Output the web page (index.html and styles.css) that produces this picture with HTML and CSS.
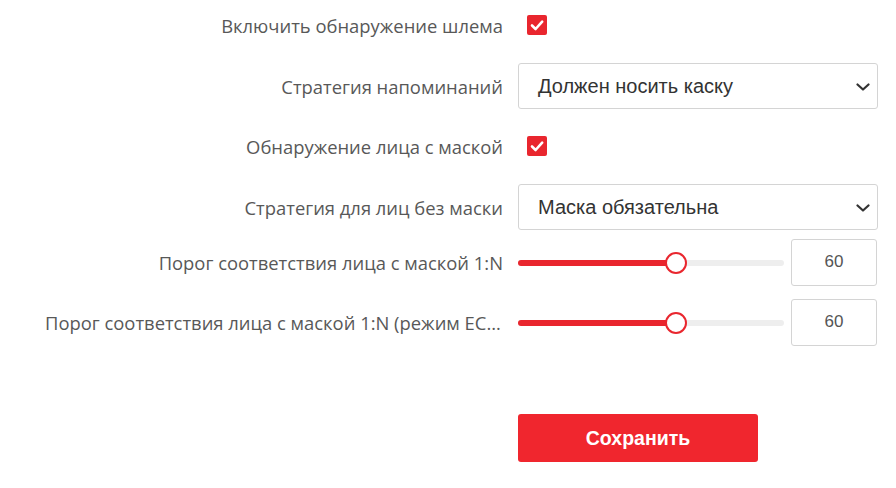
FILE: index.html
```html
<!DOCTYPE html>
<html lang="ru">
<head>
<meta charset="utf-8">
<link rel="stylesheet" href="styles.css">
</head>
<body>
<form class="form">
  <div class="row r1">
    <label class="lbl">Включить обнаружение шлема</label>
    <div class="ctl"><span class="check"><svg viewBox="0 0 20 20" width="20" height="20"><path d="M5 10.5 L8.6 14 L15.2 6.6" fill="none" stroke="#fff" stroke-width="2.6" stroke-linecap="round" stroke-linejoin="round"/></svg></span></div>
  </div>
  <div class="row r2">
    <label class="lbl">Стратегия напоминаний</label>
    <div class="ctl"><div class="select"><span class="sel-text">Должен носить каску</span><svg class="chev" viewBox="0 0 14 8" width="14" height="8"><path d="M1.5 1.5 L7 6.5 L12.5 1.5" fill="none" stroke="#333" stroke-width="2.2" stroke-linecap="round" stroke-linejoin="round"/></svg></div></div>
  </div>
  <div class="row r3">
    <label class="lbl">Обнаружение лица с маской</label>
    <div class="ctl"><span class="check"><svg viewBox="0 0 20 20" width="20" height="20"><path d="M5 10.5 L8.6 14 L15.2 6.6" fill="none" stroke="#fff" stroke-width="2.6" stroke-linecap="round" stroke-linejoin="round"/></svg></span></div>
  </div>
  <div class="row r4">
    <label class="lbl">Стратегия для лиц без маски</label>
    <div class="ctl"><div class="select"><span class="sel-text">Маска обязательна</span><svg class="chev" viewBox="0 0 14 8" width="14" height="8"><path d="M1.5 1.5 L7 6.5 L12.5 1.5" fill="none" stroke="#333" stroke-width="2.2" stroke-linecap="round" stroke-linejoin="round"/></svg></div></div>
  </div>
  <div class="row r5">
    <label class="lbl">Порог соответствия лица с маской 1:N</label>
    <div class="ctl slider-ctl">
      <div class="slider"><div class="track"><div class="fill" style="width: 158px"></div><span class="thumb" style="left: 147px"></span></div></div>
      <div class="num">60</div>
    </div>
  </div>
  <div class="row r6">
    <label class="lbl">Порог соответствия лица с маской 1:N (режим ECO)</label>
    <div class="ctl slider-ctl">
      <div class="slider"><div class="track"><div class="fill" style="width: 158px"></div><span class="thumb" style="left: 147px"></span></div></div>
      <div class="num">60</div>
    </div>
  </div>
  <div class="actions">
    <button type="button" class="save">Сохранить</button>
  </div>
</form>
</body>
</html>
```
FILE: styles.css
```css
html, body {
  margin: 0;
  padding: 0;
  background: #fff;
}
.form {
  display: flex;
  flex-direction: column;
  padding-top: 2px;
  width: 880px;
}
.row {
  display: grid;
  grid-template-columns: 458px 360px;
  column-gap: 15px;
  padding-left: 45px;
  height: 46px;
  align-items: center;
}
.r2 { margin-top: 15px; }
.r3 { margin-top: 14px; }
.r4 { margin-top: 15px; }
.r5 { margin-top: 9px; height: 47px; }
.r6 { margin-top: 13px; height: 47px; }
.lbl {
  font-family: "Open Sans", "Noto Sans", sans-serif;
  font-size: 18.4px;
  color: #585858;
  text-align: right;
  white-space: nowrap;
  overflow: hidden;
  text-overflow: ellipsis;
}
.ctl {
  display: flex;
  align-items: center;
  height: 100%;
}
.check {
  width: 20px;
  height: 20px;
  margin-left: 9px;
  background: #e9262e;
  border-radius: 2px;
  display: flex;
}
.select {
  box-sizing: border-box;
  width: 360px;
  height: 46px;
  border: 1px solid #d4d4d4;
  border-radius: 3px;
  display: flex;
  align-items: center;
  justify-content: space-between;
  padding: 0 7px 0 19px;
  font-family: "Liberation Sans", Arial, sans-serif;
  font-size: 20px;
  color: #333;
}
.chev { margin-top: 1px; }
.slider-ctl {
  gap: 7px;
}
.slider {
  width: 266px;
  display: flex;
  align-items: center;
}
.track {
  position: relative;
  width: 100%;
  height: 6px;
  border-radius: 3px;
  background: #eeeeee;
}
.fill {
  height: 100%;
  border-radius: 3px;
  background: #e9262e;
}
.thumb {
  position: absolute;
  top: 50%;
  width: 22px;
  height: 22px;
  margin-top: -11px;
  box-sizing: border-box;
  border: 2.5px solid #e9262e;
  border-radius: 50%;
  background: #fff;
}
.num {
  box-sizing: border-box;
  width: 86px;
  height: 47px;
  border: 1px solid #d4d4d4;
  border-radius: 3px;
  display: flex;
  align-items: center;
  justify-content: center;
  padding-bottom: 1px;
  font-family: "Liberation Sans", Arial, sans-serif;
  font-size: 17px;
  color: #555;
}
.actions {
  margin-top: 68px;
  padding-left: 518px;
}
.save {
  width: 240px;
  height: 48px;
  border: none;
  border-radius: 3px;
  background: #f0262e;
  color: #fff;
  font-family: "Liberation Sans", Arial, sans-serif;
  font-weight: bold;
  font-size: 19.5px;
  cursor: pointer;
}
```
